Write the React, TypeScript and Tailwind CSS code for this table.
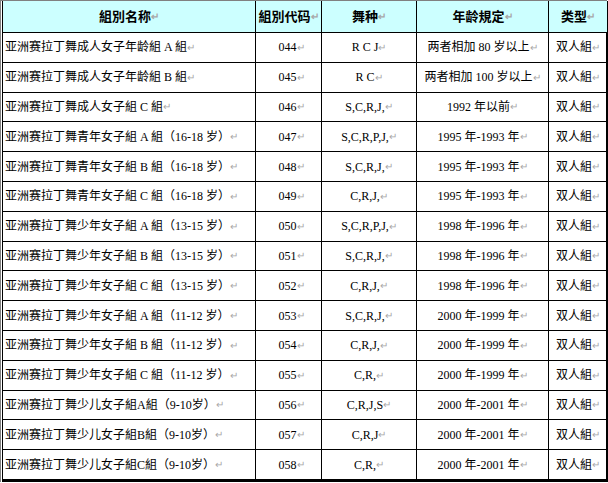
const rows = [
  ["亚洲赛拉丁舞成人女子年龄組 A 組", "044", "R C J", "两者相加 80 岁以上"],
  ["亚洲赛拉丁舞成人女子年龄組 B 組", "045", "R C", "两者相加 100 岁以上"],
  ["亚洲赛拉丁舞成人女子組 C 組", "046", "S,C,R,J,", "1992 年以前"],
  ["亚洲赛拉丁舞青年女子組 A 組（16-18 岁）", "047", "S,C,R,P,J,", "1995 年-1993 年"],
  ["亚洲赛拉丁舞青年女子組 B 組（16-18 岁）", "048", "S,C,R,J,", "1995 年-1993 年"],
  ["亚洲赛拉丁舞青年女子組 C 組（16-18 岁）", "049", "C,R,J,", "1995 年-1993 年"],
  ["亚洲赛拉丁舞少年女子組 A 組（13-15 岁）", "050", "S,C,R,P,J,", "1998 年-1996 年"],
  ["亚洲赛拉丁舞少年女子組 B 組（13-15 岁）", "051", "S,C,R,J,", "1998 年-1996 年"],
  ["亚洲赛拉丁舞少年女子組 C 組（13-15 岁）", "052", "C,R,J,", "1998 年-1996 年"],
  ["亚洲赛拉丁舞少年女子組 A 組（11-12 岁）", "053", "S,C,R,J,", "2000 年-1999 年"],
  ["亚洲赛拉丁舞少年女子組 B 組（11-12 岁）", "054", "C,R,J,", "2000 年-1999 年"],
  ["亚洲赛拉丁舞少年女子組 C 組（11-12 岁）", "055", "C,R,", "2000 年-1999 年"],
  ["亚洲赛拉丁舞少儿女子組A組（9-10岁） ", "056", "C,R,J,S", "2000 年-2001 年"],
  ["亚洲赛拉丁舞少儿女子組B組（9-10岁） ", "057", "C,R,J", "2000 年-2001 年"],
  ["亚洲赛拉丁舞少儿女子組C組（9-10岁） ", "058", "C,R,", "2000 年-2001 年"],
];

const headers = ["組別名称", "組別代码", "舞种", "年龄規定", "类型"];

const Mark = () => <span className="text-[10px] text-[#a8a8a8]">↵</span>;

export default function App() {
  return (
    <div className="w-[608px] h-[483px] bg-white font-['Liberation_Serif','Noto_Sans_CJK_SC',serif] text-[12px] text-black">
      <div className="border-l border-t border-[#808080] pl-px w-[607px]">
        <div className="grid grid-cols-[253px_66px_95px_132px_58px] border-l border-black border-b-2 border-r-2 w-[606px]">
          {headers.map((h, i) => (
            <div
              key={h}
              className={`h-[32px] bg-[#ccffff] border-b border-black flex items-center justify-center font-bold text-[13px] ${i < 4 ? "border-r" : ""}`}
            >
              {h}
              <Mark />
            </div>
          ))}
          {rows.map((r) => (
            <div key={r[1]} className="contents">
              <div className="h-[29.8px] border-r border-b border-black flex items-center pl-[2px] whitespace-nowrap">
                {r[0]}
                <Mark />
              </div>
              <div className="h-[29.8px] border-r border-b border-black flex items-center justify-center pl-[6px]">
                {r[1]}
                <Mark />
              </div>
              <div className="h-[29.8px] border-r border-b border-black flex items-center justify-center">
                {r[2]}
                <Mark />
              </div>
              <div className="h-[29.8px] border-r border-b border-black flex items-center justify-center">
                {r[3]}
                <Mark />
              </div>
              <div className="h-[29.8px] border-b border-black flex items-center justify-center">
                双人組
                <Mark />
              </div>
            </div>
          ))}
        </div>
      </div>
    </div>
  );
}
